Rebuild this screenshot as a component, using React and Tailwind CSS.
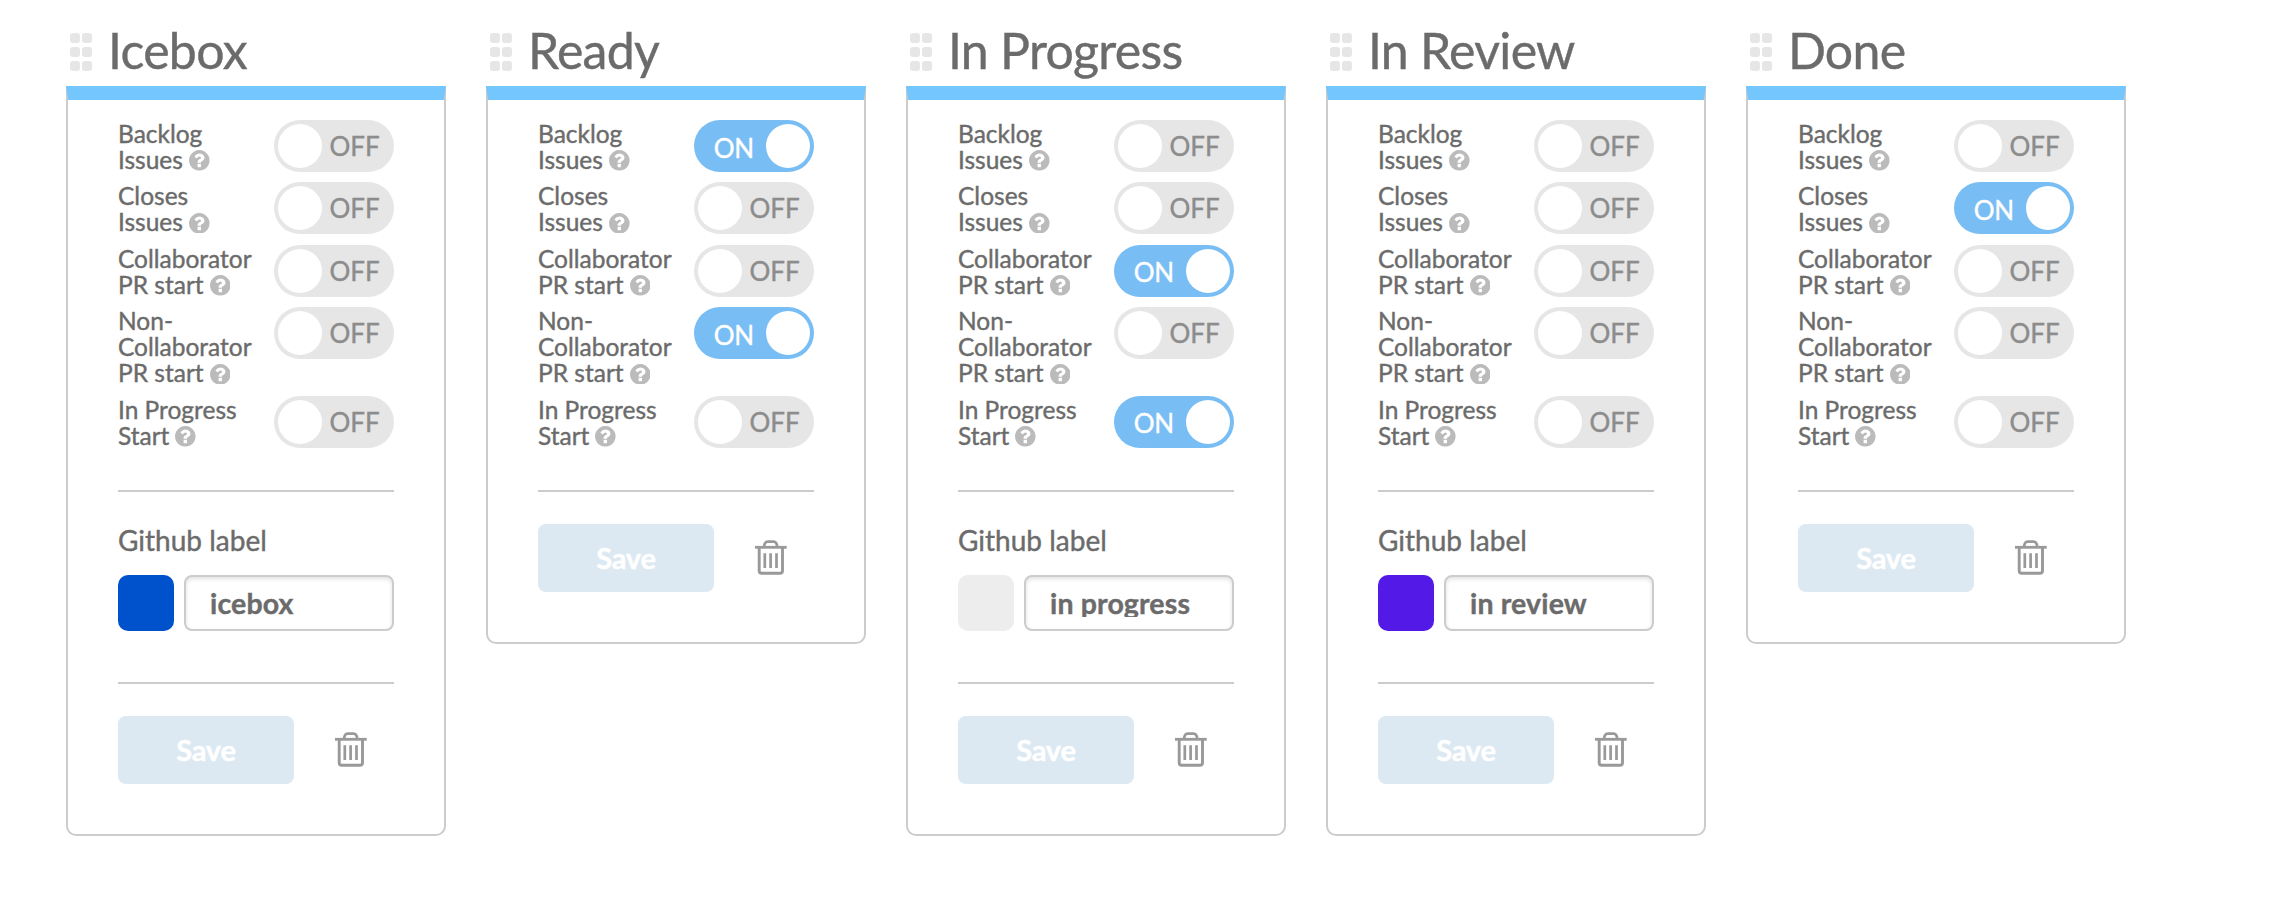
const SETTINGS = [
  ["Backlog", "Issues"],
  ["Closes", "Issues"],
  ["Collaborator", "PR start"],
  ["Non-", "Collaborator", "PR start"],
  ["In Progress", "Start"],
];

const COLUMNS = [
  { title: "Icebox", on: [], label: "icebox", swatch: "bg-[#0052cc]" },
  { title: "Ready", on: [0, 3] },
  { title: "In Progress", on: [2, 4], label: "in progress", swatch: "bg-[#ededed]" },
  { title: "In Review", on: [], label: "in review", swatch: "bg-[#5319e7]" },
  { title: "Done", on: [1] },
];

function Grip() {
  return (
    <div className="grid grid-cols-2 gap-x-[1.6px] gap-y-[3.4px]">
      {[0, 1, 2, 3, 4, 5].map((i) => (
        <span key={i} className="size-[10.4px] rounded-[3px] bg-[#e6e6e6]" />
      ))}
    </div>
  );
}

function Help() {
  return (
    <svg viewBox="128 128 1536 1536" className="ml-[6px] inline-block size-[20.6px] align-[-2px]" fill="#bbbbbb">
      <path d="M1024 1376v-192q0-14-9-23t-23-9h-192q-14 0-23 9t-9 23v192q0 14 9 23t23 9h192q14 0 23-9t9-23zm256-672q0-88-55.500-163t-138.500-116-170-41q-243 0-371 213-15 24 8 42l132 100q7 6 19 6 16 0 25-12 53-68 86-92 34-24 86-24 48 0 85.500 26t37.500 59q0 38-20 61t-68 45q-63 28-115.500 86.500t-52.500 125.500v36q0 14 9 23t23 9h192q14 0 23-9t9-23q0-19 21.500-49.500t54.500-49.500q32-18 49-28.500t46-35 44.500-48 28-60.500 12.500-81zm384 192q0 209-103 385.500t-279.500 279.500-385.500 103-385.500-103-279.500-279.500-103-385.500 103-385.500 279.500-279.500 385.500-103 385.500 103 279.500 279.500 103 385.500z" />
    </svg>
  );
}

function Trash() {
  return (
    <svg width="32" height="35" viewBox="0 0 32 35" fill="none" stroke="#999999">
      <path d="M0 7.300H31.700" strokeWidth="2.800" />
      <path d="M9 7.200C9.300 3.600 10.400 1.700 12.700 1.700H18.600C20.900 1.700 22 3.600 22.300 7.200" strokeWidth="2.700" />
      <path d="M4.200 7.500V30.800Q4.200 33.300 6.700 33.300H25Q27.500 33.300 27.500 30.800V7.500" strokeWidth="2.900" />
      <path d="M9.800 13.300V28M15.600 13.300V28M21.500 13.300V28" strokeWidth="2.700" />
    </svg>
  );
}

function Toggle({ on }) {
  return on ? (
    <div className="flex h-[52px] w-[120px] shrink-0 items-center justify-end rounded-full bg-[#78bdf3] p-1 text-white">
      <span className="mt-[3px] mr-[12.5px] text-[26px] leading-none tracking-[-0.5px]">ON</span>
      <span className="size-11 rounded-full bg-white" />
    </div>
  ) : (
    <div className="flex h-[52px] w-[120px] shrink-0 items-center rounded-full bg-[#e6e6e6] p-1 text-[#8c8c8c]">
      <span className="size-11 rounded-full bg-white" />
      <span className="ml-[7.5px] text-[26px] leading-none">OFF</span>
    </div>
  );
}

function Column({ title, on, label, swatch }) {
  return (
    <section className="w-[380px]">
      <header className="flex h-[86px] items-start pt-[33px] pl-1">
        <Grip />
        <h2 className="-mt-[13px] ml-[15.5px] text-[50px] leading-[60px] tracking-[-0.7px] whitespace-nowrap">{title}</h2>
      </header>
      <div className="rounded-b-[10px] border-2 border-t-[14px] border-[#cccccc] border-t-[#74c6ff] px-[50px] pt-5 pb-[50px]">
        <div className="h-[370px]">
          {SETTINGS.map((lines, i) => (
            <div key={i} className="flex h-[62.4px] items-start justify-between nth-4:h-[88.6px]">
              <div className="pt-[0.8px] text-[24.5px] leading-[26.2px] whitespace-nowrap">
                {lines.map((line, j) => (
                  <div key={j} className="h-[26.2px]">
                    {line}
                    {j === lines.length - 1 && <Help />}
                  </div>
                ))}
              </div>
              <Toggle on={on.includes(i)} />
            </div>
          ))}
        </div>
        {label && (
          <div className="h-[192px] border-t-2 border-[#cccccc] pt-[29.5px]">
            <div className="text-[28px] leading-[36px]">Github label</div>
            <div className="mt-[17.5px] flex gap-[10px]">
              <span className={"size-14 rounded-[10px] " + swatch} />
              <div className="h-14 w-[210px] rounded-lg border-2 border-[#cccccc] px-6 py-3 shadow-[inset_0_2px_4px_rgba(0,0,0,0.12)]">
                <div className="h-7 overflow-hidden text-[28.5px] leading-7 font-bold tracking-[0.15px] whitespace-nowrap">{label}</div>
              </div>
            </div>
          </div>
        )}
        <div className="flex items-start border-t-2 border-[#cccccc] pt-8">
          <button className="h-[68px] w-44 rounded-lg bg-[#dce9f2] text-[29px] font-bold tracking-[-0.2px] text-white">
            Save
          </button>
          <span className="mt-4 ml-[41px]">
            <Trash />
          </span>
        </div>
      </div>
    </section>
  );
}

export default function App() {
  return (
    <main className="flex h-[904px] w-[2276px] items-start gap-10 overflow-hidden bg-white pl-[66px] font-['Lato',sans-serif] text-[#6b6b6b] [-webkit-text-stroke:0.4px]">
      {COLUMNS.map((c) => (
        <Column key={c.title} {...c} />
      ))}
    </main>
  );
}
